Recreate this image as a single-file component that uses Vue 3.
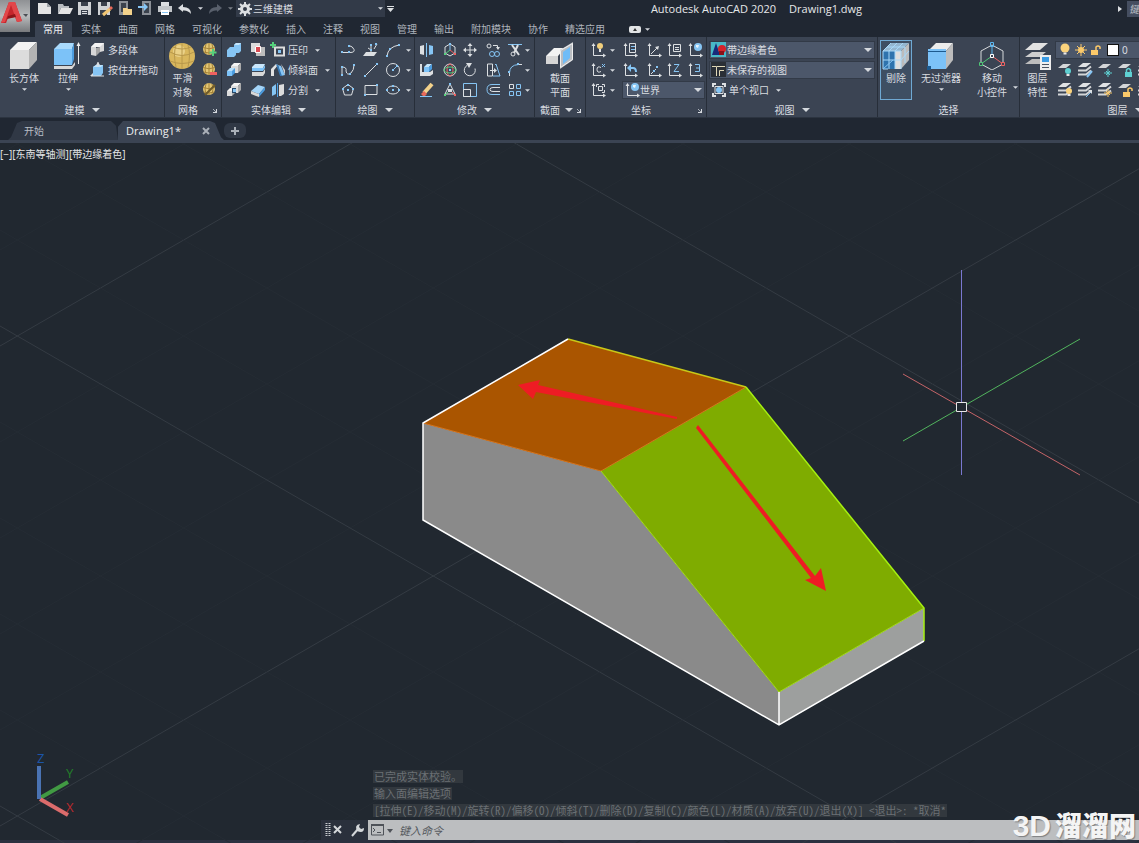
<script setup>
import { h } from 'vue'

const W = '#dcdfe2'
const B = '#86c5f4'
const ln = (d, c = W, w = 1) => `<path d="${d}" fill="none" stroke="${c}" stroke-width="${w}"/>`
const fl = (d, c = W) => `<path d="${d}" fill="${c}"/>`
const dots = (pts, c = B) => pts.map(([x, y]) => `<rect x="${x - 1}" y="${y - 1}" width="2" height="2" fill="${c}"/>`).join('')
const axis = ln('M3.500 2v11.500h10') + fl('M1.500 4 3.500 1 5.500 4zM13 11.500l3 2-3 2z')
const cube = (x, y, s, c, t, r) =>
  fl(`M${x} ${y + 3}h${s}v${s}h-${s}z`, c) + fl(`M${x} ${y + 3}l3-3h${s}l-3 3z`, t) + fl(`M${x + s} ${y + 3}l3-3v${s}l-3 3z`, r)
const sheet = (y, c = '#d4d6d8') => fl(`M1 ${y + 4}l5-4h8l-5 4z`, c)
const stack = fl('M1 5l5-4h8l-5 4z', '#e0e2e4') + ln('M1 8.500h8l5-4M1 12.500h8l5-4', '#d4d6d8', 2)
const globe = (c, r = 6) =>
  `<circle cx="7" cy="7" r="${r}" fill="${c}"/>` + ln('M1 5.500q6 2.500 12 0M1.500 10q5.500 2 11 0M7 1v12M4 2q-2 5 0 10M10 2q2 5 0 10', '#a5843a', 1)
const bulb = (x, y, r, c) => `<circle cx="${x}" cy="${y}" r="${r}" fill="${c}"/><rect x="${x - 1.5}" y="${y + r}" width="3" height="2" fill="#e8e8e8"/>`
const sun = (x, y, r, c) =>
  `<circle cx="${x}" cy="${y}" r="${r}" fill="${c}"/>` +
  ln(`M${x} ${y - r - 3}v${2 * r + 6}M${x - r - 3} ${y}h${2 * r + 6}M${x - r - 1} ${y - r - 1}l${2 * r + 2} ${2 * r + 2}M${x + r + 1} ${y - r - 1}l-${2 * r + 2} ${2 * r + 2}`, c)
const lock = (x, y, c, open) =>
  `<rect x="${x}" y="${y}" width="7" height="5" fill="${c}"/>` + ln(open ? `M${x + 5} ${y}v-3q2-2 4 0v2` : `M${x + 1.5} ${y}v-2q2-3 4 0v2`, c, 1.5)

const icons = {
  newFile: fl('M1 2h9l4 4v7H1z', '#e4e4e4') + fl('M10 2v4h4z', '#9ea3a8'),
  open: fl('M1 3h5l1 2h5v2H4l-3 6z', '#b8bcc0') + fl('M4 7h12l-3 6H1z', '#e4e4e4'),
  save: fl('M1 1h13v13H1z', '#cfd2d5') + fl('M4 1h7v4H4zM4 9h7v5H4z', '#39404c') + fl('M5 10h5v1H5zM5 12h5v1H5z', W),
  saveAs: fl('M1 1h12v13H1z', '#cfd2d5') + fl('M4 1h6v4H4zM3 9h7v5H3z', '#39404c') + ln('M6 14l7-6', '#f0c674', 3) + fl('M12 7l2-2 2 2-2 2z', '#e86a5a'),
  openWeb: fl('M2 0h9v14H2z', '#8b9097') + fl('M4 2h5v9H4z', '#3b424d') + fl('M6 7h4l1 1h4v6H6z', '#f3d28b'),
  saveWeb: fl('M5 0h9v14H5z', '#8b9097') + fl('M7 2h5v10H7z', '#3b424d') + ln('M1 6h7', B, 2) + fl('M7 2l4 4-4 4z', B),
  print: fl('M4 1h8v4H4z', W) + fl('M1 5h14v6H1z', '#c2c6ca') + fl('M4 9h8v5H4z', '#fff') + fl('M5 11h6v1H5z', B),
  undo: fl('M1 7l5-4v3q8 0 8 7-3-4-8-3.500V11z'),
  redo: fl('M15 7l-5-4v3q-8 0-8 7 3-4 8-3.500V11z', '#59606c'),
  gear: `<circle cx="8" cy="8" r="3.500" fill="none" stroke="${W}" stroke-width="3"/>` + ln('M8 1v3M8 12v3M1 8h3M12 8h3M3 3l2 2M11 11l2 2M13 3l-2 2M5 11l-2 2', W, 2),

  box: fl('M0 8h19v19H0z', '#dcdcdc') + fl('M0 8l8-8h19l-8 8z', '#f3f3f3') + fl('M19 8l8-8v18l-8 9z', '#b4b4b4'),
  extrude: fl('M0 7h18v16H0z', '#7cc2f8') + fl('M0 7l6-6h14l-2 6z', '#a9dafc') + fl('M18 7l2-6v16l-2 6z', '#4c9de0') + fl('M0 24h18l3-4v3l-3 4H0z', '#d8d8d8') + ln('M24.500 3v19', '#eee') + fl('M22.500 4l2-4 2 4z', '#eee'),
  polysolid: fl('M1 5l4-4h9v8l-4 1V5H6v9l-5-1z', '#d7d7d7') + fl('M1 5l4-4h9l-4 4z', '#f4f4f4') + fl('M6 6l4-1v5l-4 4z', '#a5a5a5'),
  presspull: fl('M3 5l3-2h7v8l-2 3H3z', B) + fl('M3 5l3-2h7l-2 2z', '#c0e3fb') + ln('M1 14h13M8 0v5', W) + fl('M6 3l2-3 2 3z') + fl('M0 14l3-3v3z'),
  sphere: '<circle cx="13" cy="14" r="13" fill="#d9b75d"/><circle cx="10" cy="9" r="6" fill="#f1dc9a" opacity=".7"/>' + ln('M1 10q12 7 24 0M1 19q12 5 24 0M13 1v26M7 3q-3 9 0 22M19 3q3 9 0 22M4 5q9 4 18 0', '#b8984b'),
  meshMore: globe('#e3c673') + ln('M11 7v7M7.500 10.500h7', '#56d07c', 2),
  meshLess: globe('#e3c673') + ln('M8 11.500h7', '#ef6060', 3),
  meshCrease: globe('#e3c673') + ln('M3 13L13 3', '#6d5a2a', 2),

  union: fl('M1 8l3-3h4V3l2-2h5v8l-2 2h-3v2l-2 2H1z', B) + fl('M8 3l2-2h5l-2 2z', '#c3e5fc'),
  subtract: cube(5, 1, 7, '#dcdcdc', '#f4f4f4', '#aaa') + cube(1, 6, 5, '#7cc2f8', '#b7dffb', '#4c9de0'),
  intersect: cube(5, 1, 7, '#dcdcdc', '#f4f4f4', '#aaa') + cube(1, 6, 5, '#dcdcdc', '#f4f4f4', '#aaa') + fl('M6 6h4v5H6z', '#274a6b') + fl('M7 7h3v3H7z', B),
  interfere: fl('M1 1h9v9H1z', '#dcdcdc') + fl('M6 5h9v9H6z', '#bdbdbd') + fl('M5 4h6v7H5z', '#d84a52') + ln('M5.500 4.500h5v6h-5z', '#fff'),
  thicken: fl('M2 5l3-3h10l-2 4H2z', '#c8e6fb') + fl('M2 6h11l2-3v3l-2 3H2z', '#7cc2f8') + fl('M2 10h11l2-3v4l-2 3H2z', '#d8d8d8'),
  slab: fl('M1 9l7-6 7 2-6 7z', '#a3d4f8') + fl('M1 9l8 3v3l-8-3z', '#d8d8d8') + fl('M9 12l6-7v3l-6 7z', '#4c9de0'),
  imprint: ln('M3 0v6M0 3h6', '#56d07c', 2) + ln('M5 5.500h9v8H5z', '#dcdcdc', 2) + fl('M8 8h3v3H8z', B),
  taper: fl('M1 14L1 7l5-5 2 1-4 5v6z', '#e2e2e2') + fl('M8 3l3 1 4 9-4 1z', B) + fl('M6 2l2 1 4 11h-2z', '#3779b5') + fl('M11 2l4 6v5z', '#d0d0d0'),
  separate: fl('M2 5l4-3v10l-4 2z', B) + fl('M9 3l5-1v10l-3 2H9z', '#dcdcdc') + ln('M7.500 1v14', '#4c9de0'),

  pline: ln('M1 10.500h7M10 10.500q5 0 4-3-1-3-5-4') + dots([[2, 10], [9, 10], [9, 4]]),
  pline3d: fl('M3 10h11l-3 4H0z') + ln('M8 11V4M5 6l3 2M11 7l3-5') + dots([[8, 3], [13, 2], [8, 8]]),
  arc: ln('M2 14q1-9 12-11') + dots([[2, 14], [5, 7], [14, 3]]),
  spline: ln('M2 13V5q5 0 4 4 1 5 5 2 3-3 3-8') + dots([[2, 5], [14, 3], [10, 12], [2, 13]]),
  line: ln('M2 14L14 2') + dots([[2, 14], [14, 2]]),
  circle: `<circle cx="8" cy="8" r="6.500" fill="none" stroke="${W}"/>` + ln('M8 8l4-4', B) + dots([[8, 8], [12, 4]]),
  polygon: ln('M8 2.500l5.500 4-2 6.500h-7l-2-6.500z') + dots([[8, 3], [3, 7], [13, 7], [8, 8]]),
  rect: ln('M2 3.500h12v9H2z') + dots([[2, 13], [14, 3]]),
  ellipse: `<ellipse cx="8" cy="8" rx="6" ry="4" fill="none" stroke="${W}"/>` + dots([[8, 8], [2, 8], [14, 8], [8, 4]]),

  mirror3d: fl('M1 4l4-1v10l-4-1z') + fl('M10 3l4 1v8l-4 1z', B) + ln('M7.500 1v14', B),
  gizmoMove: ln('M8 2l5 3v6l-5 3-5-3V5z') + ln('M8 8V3', B) + ln('M8 8l5 4', '#ef6060') + ln('M8 8l-5 4', '#56d07c') + dots([[8, 2]], B) + dots([[13, 12]], '#ef6060') + dots([[3, 12]], '#56d07c'),
  move: ln('M8 2v12M2 8h12', W, 1) + fl('M5.500 4L8 1l2.500 3zM5.500 12L8 15l2.500-3zM4 5.500L1 8l3 2.500zM12 5.500L15 8l-3 2.500z'),
  copy: `<circle cx="4" cy="4" r="2" fill="none" stroke="${W}"/><circle cx="7" cy="12" r="2.500" fill="none" stroke="${B}"/><circle cx="12" cy="12" r="2.500" fill="none" stroke="${B}"/>` + ln('M8 3.500h4.500v3') + fl('M11 5h4l-2 3z'),
  trim: ln('M1 2.500h14', B) + ln('M5 3l7 10M11 3L7 11', W, 2) + `<circle cx="6" cy="12" r="2" fill="none" stroke="${W}"/>`,
  align3d: fl('M1 2h2v12H1z') + fl('M3 10h8l3-2v4l-3 2H3z') + cube(5, 2, 5, '#7cc2f8', '#c3e5fc', '#4c9de0'),
  gizmoRotate: `<circle cx="8" cy="8" r="6" fill="none" stroke="${W}"/><ellipse cx="8" cy="8" rx="3" ry="6" fill="none" stroke="#ef6060"/><ellipse cx="8" cy="8" rx="6" ry="3" fill="none" stroke="#56d07c"/>` + dots([[8, 8]]),
  rotate: ln('M5 3.500a5.500 5.500 0 1 0 8 3', W, 1) + fl('M4 1h6L7 6z'),
  stretch: ln('M2.500 2v12h5V2z') + ln('M10 3l1-1 4 12H8', B) + ln('M5 8.500h5') + fl('M9 6l3 2.500L9 11z'),
  fillet: ln('M2.500 14v-3', W) + ln('M11 2.500h4') + ln('M2.500 11q0-8 9-8.500', B) + dots([[2, 10], [11, 2]]),
  erase: ln('M5 11L13 2', '#f3d28b', 4) + fl('M2 12l3-3 3 3-3 3z', '#e86a5a') + ln('M1 14.500h12', B),
  gizmoScale: ln('M8 2l5 10H3z') + ln('M8 8l5 5', '#ef6060') + ln('M8 8l-5 5', '#56d07c') + fl('M6 7h4v3H6z') + dots([[8, 2]], B) + dots([[13, 13]], '#ef6060') + dots([[3, 13]], '#56d07c'),
  scale: ln('M1.500 1.500h13v13h-13z', B) + ln('M1.500 7.500h7v7h-7z'),
  offset: ln('M15 2.500H7q-5 0-5 5t5 5h8', B) + ln('M15 5.500H8q-3 0-3 2t3 2h7'),
  array: ln('M2.500 2.500h4v4h-4z') + ln('M9.500 2.500h4v4h-4zM2.500 9.500h4v4h-4zM9.500 9.500h4v4h-4z', B),

  section: fl('M0 14l8-8h11l-7 8z', '#f3f3f3') + fl('M0 14h12v8H0z', '#d6d6d6') + fl('M14 8l13-8v18l-13 9z', '#b9bdc2') + fl('M17 10l7-5v11l-7 6z', '#6fbcf7') + ln('M14.500 8.500v17l12-8v-16z', '#eee'),

  ucsPoint: axis + '<circle cx="10" cy="4" r="3" fill="#f1cf7c"/>' + fl('M9 7h2v3H9z'),
  ucsNamed: axis + ln('M7.500 1.500h6v9h-6z') + ln('M9 4.500h4M9 7.500h4', B),
  ucsOrigin: axis + ln('M5 12l6-6') + fl('M13 4l-1 4-3-3z'),
  ucsView: axis + ln('M7.500 2.500h7v7h-7z') + ln('M9 5.500h4M9 7.500h4'),
  ucsWorld: axis + `<circle cx="11" cy="5" r="4" fill="${B}"/>` + fl('M9 3h3l-1 3-2-1z', '#e8f4fc'),
  ucsX: axis + ln('M11 5.500q-4-2-4 2t4 2') + ln('M12 2l3 3M15 2l-3 3', B),
  ucsPrev: axis + ln('M8 6h3q3 0 3 4', B, 2) + fl('M9 2v8L5 6z', B),
  ucsZaxis: axis + ln('M5 12l5-5', W) + dots([[11, 5], [8, 9]]),
  ucsZ: axis + ln('M8 2.500h5l-5 7h5', B),
  ucs3: axis + ln('M8 2.500h4.500v7H8M9 6h3', B),
  ucsFace: axis + ln('M6.500 5V2.500H9M12 2.500h2.500V5M14.500 8v2.500H12') + ln('M8.500 4.500h4v4h-4z'),

  shaded: fl('M0 0h15v15H0z', '#48b8c8') + fl('M5 1l4 12H1z', '#182a7a') + '<circle cx="11" cy="7" r="4" fill="#d5232b"/>' + fl('M8 9h5v4H8z', '#8d1018'),
  viewport: fl('M0 0h15v15H0z', '#2a2f36') + ln('M1 4.500h4M5.500 14V4.500H14M8.500 14V8.500H13', '#e0d8b8'),
  single: ln('M2 5V2h3M11 2h3v3M14 11v3h-3M5 14H2v-3', W, 2) + ln('M4 4.500h8v7H4z') + `<circle cx="8" cy="8" r="3" fill="${B}"/>`,

  cull: fl('M1 9l8-8h18l-8 8z', '#94b6cf') + fl('M1 9h12v18H1z', '#2f73ad') + fl('M13 9h6v18h-6z', '#dedede') + fl('M19 9l8-8v17l-8 9z', '#bcbcbc') + ln('M1 9l8-8M7 9l8-8M13 9l8-8M1 9h18v18M1 9v18h5M7 9v18M13 9v18M1 18h18l8-9M5 5h18v16', '#a8d8f8') + ln('M1 27l10-9', '#86c5f4'),
  filter: fl('M1 9l8-8h17l-7 8z', '#ececec') + fl('M19 9l7-8v17l-7 9z', '#bcbcbc') + fl('M1 7h18v20H1z', '#7cc2f8') + ln('M1 9.500h18', '#1d5a8f') + fl('M0 24h4v4H0z', '#1d5a8f'),
  gizmo: ln('M14 3l11 6v13l-11 6-11-6V9z', '#d5d8db') + ln('M14 14V3', '#5cb8f2', 1) + ln('M14 14l11 8', '#ef6060', 1) + ln('M14 14L3 22', '#4fc476', 1) + '<g fill-opacity="0">' + ln('M12.500 .5h3v4h-3z', '#5cb8f2') + '</g>' + '<path d="M12.500 12.500h3v3h-3z" fill="#3b4453" stroke="#fff"/><path d="M1.500 20.500h3v3h-3z" fill="#3b4453" stroke="#4fc476"/><path d="M23.500 20.500h3v3h-3z" fill="#3b4453" stroke="#ef6060"/>',
  layers: fl('M1 8l8-7h15l-8 7z', '#e2e2e2') + fl('M1 15l7-5h14l-6 5z', '#cfcfcf') + fl('M1 22l7-5h10v5z', '#bdbdbd') + fl('M16 13h11v15H16z', '#eee') + fl('M18 15h7v5h-7z', '#3a9be4') + ln('M18 22.500h7M18 25.500h7', '#4b5563'),

  bulbOn: bulb(8, 6, 4.5, '#fbd37c'),
  sunOn: sun(8, 8, 3, '#fbc96a'),
  unlock: lock(2, 8, '#fbc96a', true),
  layOff: sheet(2) + bulb(11, 9, 3, '#5fd0d2'),
  layIso: stack + ln('M15 9l-5 6', B, 2),
  layFrz: sheet(2) + sun(11, 11, 1, '#5fd0d2'),
  layLock: sheet(2) + lock(8, 10, '#5fd0d2'),
  layCur: stack,
  layOn: stack + bulb(12, 9, 3, '#fbd37c'),
  layUniso: stack + ln('M9 15l5-5', B) + fl('M11 8h4v4z'),
  layThaw: stack + sun(11, 11, 1, '#fbc96a'),
  layUnlock: sheet(2) + lock(6, 10, '#fbc96a', true),
}

const Ico = (p) => h('svg', {
  viewBox: `0 0 ${p.s || 16} ${p.s || 16}`, width: p.s || 16, height: p.s || 16, 'aria-hidden': 'true', innerHTML: icons[p.n],
})
Ico.props = ['n', 's']
const Chev = (p) => h('svg', {
  class: 'chev', viewBox: '0 0 8 4', width: p.big ? 8 : 5, height: p.big ? 4 : 3, 'aria-hidden': 'true', innerHTML: '<path d="M0 0h8L4 4z" fill="#d5d9de"/>',
})
Chev.props = { big: Boolean }

const quick = ['newFile', 'open', 'save', 'saveAs', 'openWeb', 'saveWeb', 'print']
const tabs = ['常用', '实体', '曲面', '网格', '可视化', '参数化', '插入', '注释', '视图', '管理', '输出', '附加模块', '协作', '精选应用']
const solids = [
  ['union', 'interfere', 'imprint', '压印'],
  ['subtract', 'thicken', 'taper', '倾斜面'],
  ['intersect', 'slab', 'separate', '分割'],
]
const draw = [['pline', 'pline3d', 'arc'], ['spline', 'line', 'circle'], ['polygon', 'rect', 'ellipse']]
const modify = [
  ['mirror3d', 'gizmoMove', 'move', 'copy', 'trim'],
  ['align3d', 'gizmoRotate', 'rotate', 'stretch', 'fillet'],
  ['erase', 'gizmoScale', 'scale', 'offset', 'array'],
]
const coords = [
  ['ucsPoint', 'ucsNamed', 'ucsOrigin', 'ucsView', 'ucsWorld'],
  ['ucsX', 'ucsPrev', 'ucsZaxis', 'ucsZ', 'ucs3'],
]
const layerTools = ['layOff', 'layIso', 'layFrz', 'layLock', 'layCur', 'layOn', 'layUniso', 'layThaw', 'layUnlock', 'layCur']

const SLOPE = 0.577
const grid = []
for (let k = -8; k <= 14; k++) {
  const major = ((k % 5) + 5) % 5 === 0
  const down = 326 + k * 96 - 480
  const up = 346 + k * 96
  grid.push({ major, x1: 0, y1: down, x2: 2400, y2: down + 2400 * SLOPE })
  grid.push({ major, x1: 0, y1: up, x2: 2400, y2: up - 2400 * SLOPE })
}
const history = [
  '已完成实体校验。',
  '输入面编辑选项',
  '[拉伸(E)/移动(M)/旋转(R)/偏移(O)/倾斜(T)/删除(D)/复制(C)/颜色(L)/材质(A)/放弃(U)/退出(X)] <退出>: *取消*',
]
</script>

<template>
  <div class="app">
    <header class="top">
      <button class="logo" aria-label="A">
        <svg viewBox="0 0 30 32" width="30" height="32" aria-hidden="true">
          <path d="M1 23 9 2h6l7 19-5 1-2-5-7 1-2 5z" fill="#c5262c" />
          <path d="M9 2h6l7 19-5 1-6-17-6 17-4 1z" fill="#e2474a" />
          <path d="M8 16l7-2 1 3-9 2z" fill="#8e1519" />
          <path d="M23 14h5l-2 3z" fill="#4b4f55" />
        </svg>
      </button>
      <div class="bars">
        <div class="title">
          <button v-for="q in quick" :key="q" class="q"><Ico :n="q" /></button>
          <button class="q"><Ico n="undo" /></button>
          <button class="qd"><Chev /></button>
          <button class="q"><Ico n="redo" /></button>
          <button class="qd dim"><Chev /></button>
          <label class="pick workspace">
            <Ico n="gear" />
            <select><option>三维建模</option></select>
            <Chev />
          </label>
          <button class="qd"><svg width="7" height="6" viewBox="0 0 7 6" aria-hidden="true"><path d="M0 0h7v1H0zM0 2h7L3.500 6z" fill="#dcdfe2" /></svg></button>
          <h1><span>Autodesk AutoCAD 2020</span><span>Drawing1.dwg</span></h1>
          <svg width="4" height="6" viewBox="0 0 4 6" aria-hidden="true"><path d="M0 0l4 3-4 3z" fill="#dcdfe2" /></svg>
          <input class="search" placeholder="键" aria-label="键" />
        </div>
        <nav class="tabs">
          <button v-for="(t, i) in tabs" :key="t" :class="{ on: i === 0 }">{{ t }}</button>
          <button class="mini">
            <svg width="12" height="7" viewBox="0 0 12 7" aria-hidden="true"><rect width="12" height="7" rx="2" fill="#e2e4e6" /><path d="M4 5l2-3 2 3z" fill="#333" /></svg>
            <Chev />
          </button>
        </nav>
      </div>
    </header>

    <section class="ribbon">
      <div class="panel p-model">
        <div class="body">
          <button class="big"><Ico n="box" s="28" /><span>长方体</span><Chev /></button>
          <button class="big"><Ico n="extrude" s="28" /><span>拉伸</span><Chev /></button>
          <button class="row"><Ico n="polysolid" /><span>多段体</span></button>
          <button class="row"><Ico n="presspull" /><span>按住并拖动</span></button>
        </div>
        <footer>建模 <Chev big /></footer>
      </div>

      <div class="panel p-mesh">
        <div class="body">
          <button class="big"><Ico n="sphere" s="28" /><span>平滑</span><span>对象</span></button>
          <button class="ic"><Ico n="meshMore" /></button>
          <button class="ic"><Ico n="meshLess" /></button>
          <button class="ic"><Ico n="meshCrease" /></button>
        </div>
        <footer class="launching">网格 <i class="launch"></i></footer>
      </div>

      <div class="panel p-solid">
        <div class="body">
          <template v-for="r in solids" :key="r[0]">
            <button class="ic"><Ico :n="r[0]" /></button>
            <button class="ic"><Ico :n="r[1]" /></button>
            <button class="row"><Ico :n="r[2]" /><span>{{ r[3] }}</span><Chev /></button>
          </template>
        </div>
        <footer>实体编辑 <Chev big /></footer>
      </div>

      <div class="panel p-draw">
        <div class="body">
          <template v-for="r in draw" :key="r[0]">
            <button v-for="n in r" :key="n" class="ic"><Ico :n="n" /></button>
            <button class="ic"><Chev /></button>
          </template>
        </div>
        <footer>绘图 <Chev big /></footer>
      </div>

      <div class="panel p-modify">
        <div class="body">
          <template v-for="(r, i) in modify" :key="i">
            <button v-for="n in r" :key="n" class="ic"><Ico :n="n" /></button>
            <button class="ic"><Chev v-if="i !== 2 || r" /></button>
          </template>
        </div>
        <footer>修改 <Chev big /></footer>
      </div>

      <div class="panel p-section">
        <div class="body">
          <button class="big"><Ico n="section" s="28" /><span>截面</span><span>平面</span></button>
        </div>
        <footer>截面 <Chev big /><i class="launch"></i></footer>
      </div>

      <div class="panel p-coord">
        <div class="body">
          <template v-for="(r, i) in coords" :key="i">
            <template v-for="(n, j) in r" :key="n">
              <button class="ic"><Ico :n="n" /></button>
              <button v-if="j === 0" class="ic"><Chev /></button>
            </template>
          </template>
          <button class="ic"><Ico n="ucsFace" /></button>
          <button class="ic"><Chev /></button>
          <label class="pick world"><Ico n="ucsWorld" /><select><option>世界</option></select><Chev big /></label>
        </div>
        <footer class="launching">坐标 <i class="launch"></i></footer>
      </div>

      <div class="panel p-view">
        <div class="body">
          <label class="pick"><Ico n="shaded" /><select><option>带边缘着色</option></select><Chev big /></label>
          <label class="pick"><Ico n="viewport" /><select><option>未保存的视图</option></select><Chev big /></label>
          <button class="row"><Ico n="single" /><span>单个视口</span><Chev /></button>
        </div>
        <footer>视图 <Chev big /></footer>
      </div>

      <div class="panel p-select">
        <div class="body">
          <button class="big on"><Ico n="cull" s="28" /><span>剔除</span></button>
          <button class="big"><Ico n="filter" s="28" /><span>无过滤器</span><Chev /></button>
          <button class="big"><Ico n="gizmo" s="28" /><span>移动</span><span>小控件</span></button>
          <button class="ic side"><Chev /></button>
        </div>
        <footer>选择</footer>
      </div>

      <div class="panel p-layer">
        <div class="body">
          <button class="big"><Ico n="layers" s="28" /><span>图层</span><span>特性</span></button>
          <label class="pick layer">
            <Ico n="bulbOn" /><Ico n="sunOn" /><Ico n="unlock" /><i class="swatch"></i>
            <select><option>0</option></select>
          </label>
          <button v-for="(n, i) in layerTools" :key="i" class="ic"><Ico :n="n" /></button>
        </div>
        <footer>图层 <Chev big /></footer>
      </div>
    </section>

    <nav class="docs">
      <button class="doc">开始</button>
      <button class="doc active"><span>Drawing1*</span>
        <svg width="8" height="8" viewBox="0 0 8 8" aria-hidden="true"><path d="M1 1l6 6M7 1L1 7" stroke="#aab0b8" stroke-width="2" /></svg>
      </button>
      <button class="doc plus" aria-label="+">
        <svg width="8" height="8" viewBox="0 0 8 8" aria-hidden="true"><path d="M4 0v8M0 4h8" stroke="#aab0b8" stroke-width="2" /></svg>
      </button>
    </nav>

    <main class="canvas">
      <svg class="scene" viewBox="0 143 1139 700" preserveAspectRatio="xMinYMin slice">
        <line v-for="(g, i) in grid" :key="i" :x1="g.x1" :y1="g.y1" :x2="g.x2" :y2="g.y2" :stroke="g.major ? '#343b43' : '#252c34'" />
        <polygon points="423,423 601,471 779,692 779,725 423,520" fill="#8a8a8a" />
        <polygon points="779,692 924,608 924,641 779,725" fill="#9d9f9e" />
        <polygon points="423,423 568,339 746,387 601,471" fill="#aa5500" />
        <polygon points="601,471 746,387 924,608 779,692" fill="#7fac00" />
        <g fill="none">
          <path d="M423 423l178 48 145-84" stroke="#d9761c" />
          <path d="M601 471l178 221 145-84" stroke="#a6e01c" />
          <path d="M568 339l178 48" stroke="#c8c818" stroke-width="1.500" />
          <path d="M746 387l178 221v33" stroke="#a5f010" stroke-width="1.500" />
          <path d="M568 339L423 423v97l356 205 145-84M779 692v33" stroke="#fff" stroke-width="1.500" />
        </g>
        <path d="M518 385l22-5-2 5 139 32v2L536 392l-3 7zM698 425l117 151 6-8 5 23-21-11 6-2L696 428z" fill="#ee1c24" />
        <g fill="none">
          <path d="M961.500 270v205" stroke="#7a78d0" />
          <path d="M903 374l177 101" stroke="#c56468" />
          <path d="M903 441l177-102" stroke="#52b45e" />
          <path d="M956.500 402.500h10v9h-10z" fill="#212830" stroke="#e6e6e6" />
        </g>
        <g stroke-width="4" fill="none">
          <path d="M40 798l28-16" stroke="#419a43" />
          <path d="M40 799l28 16" stroke="#dc6c6c" />
          <path d="M39 766v33" stroke="#4a73b3" />
        </g>
        <g class="ucs">
          <text x="37" y="763" fill="#1b55a8">Z</text>
          <text x="66" y="778" fill="#237c2a">Y</text>
          <text x="66" y="812" fill="#b52a2e">X</text>
        </g>
      </svg>
      <div class="viewlabel">[−][东南等轴测][带边缘着色]</div>
      <div class="command">
        <div class="log"><p v-for="t in history" :key="t"><span>{{ t }}</span></p></div>
        <div class="line">
          <div class="grip">
            <svg width="40" height="16" viewBox="0 0 40 16" aria-hidden="true">
              <path d="M1.500 1v14M4.500 1v14" stroke="#c8ccd0" stroke-width="2" stroke-dasharray="1 1" />
              <path d="M9 4l7 7M16 4l-7 7" stroke="#d4d7da" stroke-width="2" />
              <path d="M27 14l6-7" stroke="#d4d7da" stroke-width="2" />
              <path d="M32 9q-3-6 3-7l-1 3 2 2 3-1q0 6-7 3z" fill="#d4d7da" />
            </svg>
          </div>
          <div class="entry">
            <svg width="22" height="12" viewBox="0 0 22 12" aria-hidden="true">
              <path d="M.5 1h12v10H.5z" fill="none" stroke="#4e5258" /><path d="M0 0h13v2H0z" fill="#4e5258" />
              <path d="M2 4l2 2-2 2M6 8.500h4" fill="none" stroke="#4e5258" /><path d="M16 5h6l-3 4z" fill="#4e5258" />
            </svg>
            <input placeholder="键入命令" aria-label="键入命令" />
          </div>
        </div>
      </div>
      <div class="mark"><span>3D</span>溜溜网</div>
    </main>
  </div>
</template>

<style>
body { background: #212830; }
</style>

<style scoped>
.app { display: flex; flex-direction: column; height: 100vh; overflow: hidden; background: #202732; color: #d9dce0; font: 10px/14px "Noto Sans", "Noto Sans CJK SC", sans-serif; }
.app * { box-sizing: border-box; }
button, select, input { font: inherit; color: inherit; border: 0; background: none; padding: 0; margin: 0; border-radius: 0; outline: 0; }
svg { display: block; flex: none; }
.top { display: flex; flex: none; }
.logo { width: 30px; height: 32px; flex: none; background: linear-gradient(#8f9194, #b9bbbd 50%, #77797c); }
.bars { flex: 1; min-width: 0; padding-left: 5px; }
.title { display: flex; align-items: center; height: 17px; }
.q { width: 20px; display: flex; justify-content: center; flex: none; }
.qd { width: 10px; height: 16px; display: flex; align-items: center; justify-content: center; flex: none; }
.dim { opacity: .5; }
.pick { display: flex; align-items: center; height: 18px; background: #4c576a; border: 1px solid #323a47; padding: 0 2px 0 1px; min-width: 0; }
.pick select { appearance: none; flex: 1; min-width: 0; height: 16px; line-height: 14px; }
.workspace { width: 149px; height: 17px; border: 0; background: #323a48; margin-left: 1px; flex: none; }
h1 { flex: 1; margin: 0; font: 400 11px/16px "Open Sans", "Noto Sans", sans-serif; color: #e6e8ea; display: flex; justify-content: center; gap: 13px; white-space: nowrap; }
.search { width: 12px; height: 16px; margin-left: 5px; padding-left: 2px; background: #454e60; font-style: italic; }
.tabs { display: flex; height: 20px; margin-top: 4px; }
.tabs button { padding: 1px 9px 0 8px; height: 16px; line-height: 15px; color: #aeb4bc; white-space: nowrap; }
.tabs .on { background: #3b4453; color: #eceef0; border-radius: 2px 2px 0 0; margin-right: 1px; }
.tabs .mini { display: flex; align-items: center; gap: 4px; margin-left: 7px; }

.ribbon { display: flex; flex: none; margin-top: -4px; background: #3b4453; overflow: hidden; border-bottom: 1px solid #2c3440; }
.panel { flex: none; border-right: 1px solid #272e39; padding-top: 3px; }
.body { display: grid; grid-template-rows: repeat(3, 20px); align-content: start; }
footer { position: relative; display: flex; align-items: center; justify-content: center; gap: 7px; height: 17px; padding-top: 3px; line-height: 14px; white-space: nowrap; }
.launching { padding-right: 10px; }
.launch { position: absolute; right: 4px; bottom: 4px; width: 4px; height: 4px; border-right: 1px solid #d5d9de; border-bottom: 1px solid #d5d9de; background: linear-gradient(45deg, transparent 40%, #aab0b8 40%, #aab0b8 60%, transparent 60%); }
.ic { display: flex; align-items: center; justify-content: center; min-width: 0; }
.row { display: flex; align-items: center; gap: 2px; white-space: nowrap; }
.row .chev { margin-left: 5px; }
.big { grid-row: 1 / 4; display: flex; flex-direction: column; align-items: center; padding-top: 2px; white-space: nowrap; line-height: 14px; }
.big svg + span { margin-top: 1px; }
.big .chev { margin-top: 3px; }
.big.on { background: #42597380; outline: 1px solid #6fa9d3; outline-offset: -1px; }
.p-model { width: 165px; }
.p-model .body { grid-template-columns: 48px 40px 76px; }
.p-model .row { grid-column: 3; padding-left: 2px; }
.p-mesh { width: 57px; }
.p-mesh .body { grid-template-columns: 35px 20px; }
.p-solid { width: 114px; }
.p-solid .body { grid-template-columns: 24px 24px 1fr; }
.p-draw { width: 79px; }
.p-draw .body { grid-template-columns: 24px 22px 22px 8px; }
.p-modify { width: 120px; }
.p-modify .body { grid-template-columns: 24px 22px 18px 28px 16px 8px; }
.p-section { width: 51px; }
.p-section footer { justify-content: flex-start; padding-left: 5px; gap: 5px; }
.p-coord { width: 121px; }
.p-coord .body { grid-template-columns: 24px 4px 32px 16px 24px 18px; }
.world { grid-column: 3 / 7; margin: 1px -1px 1px 8px; }
.p-view { width: 171px; }
.p-view .body { padding: 0 2px; align-items: center; }
.p-view .row { padding-left: 2px; }
.p-select { width: 142px; }
.p-select .body { grid-template-columns: 34px 58px 44px 3px; }
.p-select .big.on { margin: 0 0 0 2px; }
.side { grid-row: 3; align-items: flex-start; padding-top: 6px; }
.p-layer { flex: 1 0 210px; border: 0; }
.p-layer .body { grid-template-columns: 35px repeat(5, 20px); }
.p-layer .layer { grid-column: 2 / 7; margin-top: 1px; }
.swatch { width: 12px; height: 12px; flex: none; background: #fff; border: 1px solid #111; margin: 0 3px 0 2px; }

.docs { display: flex; flex: none; align-items: flex-end; height: 25px; padding: 0 0 0 8px; border-bottom: 3px solid #3b4453; }
.doc { height: 19px; width: 110px; padding-left: 16px; text-align: left; background: #303845; color: #b9bec5; clip-path: polygon(0 100%, 3px 85%, 9px 10%, 14px 0, calc(100% - 7px) 0, calc(100% - 2px) 25%, 100% 100%); }
.active { display: flex; align-items: center; justify-content: space-between; width: 106px; padding: 0 14px 0 8px; background: #3b4453; color: #eceef0; font: 11px/16px "Open Sans", "Noto Sans", sans-serif; clip-path: polygon(0 100%, 0 30%, 5px 0, calc(100% - 14px) 0, calc(100% - 9px) 10%, calc(100% - 3px) 85%, 100% 100%); }
.plus { width: 22px; height: 15px; margin-bottom: 2px; padding: 0; display: flex; align-items: center; justify-content: center; border-radius: 6px; clip-path: none; }

.canvas { position: relative; flex: 1; min-height: 0; background: #212830; border-bottom: 3px solid #2b3140; }
.scene { position: absolute; inset: 0; width: 100%; height: calc(100% + 3px); }
.ucs { font: 13px "Noto Sans", sans-serif; }
.viewlabel { position: absolute; left: 0; top: 4px; color: #e3e5e7; }
.command { position: absolute; left: 321px; right: 0; bottom: 0; }
.log { padding-left: 52px; font: 11px/13px "Noto Sans Mono CJK SC", "Liberation Mono", "Noto Sans CJK SC", monospace; color: #6b7074; white-space: nowrap; }
.log p { margin: 0 0 4px; height: 13px; }
.log p:last-child { margin-bottom: 3px; }
.log span { display: inline-block; background: #32383e; padding: 0 1px; }
.line { display: flex; height: 20px; }
.grip { width: 47px; display: flex; align-items: center; justify-content: center; background: #2a303c; }
.entry { flex: 1; display: flex; align-items: center; gap: 6px; padding-left: 3px; background: #bcbec0; }
.entry input { flex: 1; height: 18px; font-size: 11px; font-style: italic; }
.entry input::placeholder { color: #55595e; opacity: 1; }
.search::placeholder { color: #b9bec5; opacity: 1; }
.mark { position: absolute; right: 3px; bottom: -3px; font: 900 27px/32px "Liberation Sans", "Noto Sans CJK SC", sans-serif; color: #f4f4f4; text-shadow: 1px 1px 1px #0005; }
.mark span { font-size: 30px; margin-right: 4px; }
</style>
